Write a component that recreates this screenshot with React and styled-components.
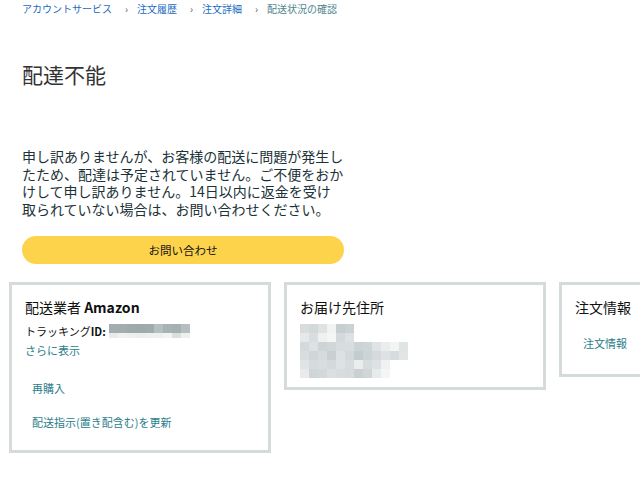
import React from 'react';
import styled, { createGlobalStyle } from 'styled-components';

const GlobalStyle = createGlobalStyle`
  html, body {
    margin: 0;
    padding: 0;
    background: #fff;
    overflow: hidden;
  }
  body {
    font-family: "Noto Sans CJK JP", "Noto Sans", sans-serif;
    color: #0f1111;
  }
`;

const Page = styled.div`
  width: 640px;
  height: 480px;
  overflow: hidden;
  display: flex;
  flex-direction: column;
`;

const Top = styled.div`
  padding-left: 22px;
  width: 322px;
  display: flex;
  flex-direction: column;
`;

const Breadcrumb = styled.nav`
  display: flex;
  align-items: center;
  height: 11px;
  margin-top: 3px;
  font-size: 10px;
  line-height: 11px;
  white-space: nowrap;
`;

const Crumb = styled.span`
  color: ${(p) => (p.$current ? '#4f8590' : '#1a6bbf')};
`;

const Sep = styled.span`
  color: #555;
  font-size: 10px;
  margin: 0 9px 0 13px;
`;

const Title = styled.h1`
  margin: 46px 0 0;
  font-size: 21px;
  line-height: 28px;
  font-weight: 400;
  color: #333;
`;

const Message = styled.p`
  margin: 60px 0 0;
  width: 322px;
  font-size: 14px;
  line-height: 17.6px;
  color: #1b3238;
`;

const ContactButton = styled.button`
  margin-top: 18px;
  width: 322px;
  height: 28px;
  border: none;
  border-radius: 14px;
  background: #fdd34b;
  font-family: inherit;
  font-size: 11.5px;
  color: #0f1111;
  padding: 0;
`;

const Cards = styled.div`
  display: flex;
  align-items: flex-start;
  gap: 13px;
  padding-left: 9px;
  margin-top: 18px;
`;

const Card = styled.section`
  flex: 0 0 auto;
  box-sizing: border-box;
  width: 262px;
  height: ${(p) => p.$h}px;
  border: 3px solid #d5dbdb;
  padding: 12px 13px 0;
  display: flex;
  flex-direction: column;
`;

const CardTitle = styled.h2`
  margin: 0;
  font-size: 14px;
  line-height: 20px;
  font-weight: 400;
  color: #0f1111;
  white-space: nowrap;
  b {
    font-weight: 600;
  }
`;

const TrackRow = styled.div`
  display: flex;
  align-items: center;
  margin-top: 6px;
  font-size: 11px;
  line-height: 16px;
  color: #0f1111;
  b {
    font-weight: 600;
  }
  svg {
    margin-left: 3px;
    display: block;
  }
`;

const Link = styled.a`
  display: block;
  color: #2c7d8c;
  font-size: ${(p) => p.$size || 11}px;
  line-height: 16px;
  margin-top: ${(p) => p.$top || 0}px;
  margin-left: ${(p) => p.$indent || 0}px;
  text-decoration: none;
  white-space: nowrap;
`;

const Blur = styled.svg`
  display: block;
  margin-top: ${(p) => p.$top || 0}px;
  margin-left: ${(p) => p.$left || 0}px;
`;

const trackTop = ['#a3adb0', '#a3adb0', '#9eaaad', '#9da9ab', '#a0abad', '#b5bfc0', '#a8b2b5', '#a5b0b3', '#b6bebf'];
const trackBottom = ['#e9ebeb', '#f0f1f1', '#eeefef', '#eceded', '#eeefef', '#efefef', '#f2f3f3', '#dcdfdf', '#eeefef'];

const addressRows = [
  ['#d8dcdd', '#d3d8da', '#dfe2e3', '#f1f2f2', '#c6ced0', '#cbd2d4'],
  ['#e6e8e9', '#d9dddf', '#eff1f1', '#f4f5f5', '#d4d9db', '#dde1e2'],
  ['#d4d9db', '#dde1e2', '#cdd4d6', '#d1d7d9', '#d7dcde', '#d9dddf', '#ccd3d5', '#cfd6d8', '#dfe3e4', '#eaeced', '#f3f4f4', '#e1e4e5'],
  ['#d9dddf', '#d0d6d8', '#d6dbdd', '#c8d0d2', '#dde1e2', '#d3d9db', '#c3cccf', '#cdd4d6', '#d5dadc', '#dfe2e3', '#d7dcde', '#e2e5e6'],
  ['#e1e4e5', '#d6dbdd', '#d9dddf', '#d4d9db', '#dee2e3', '#d7dcde', '#eaeced', '#d7dcde', '#dee1e2', '#f0f1f1'],
  ['#e8eaeb', '#cfd6d8', '#d3d9db', '#dbdfe0', '#d8dcde', '#d6dbdc', '#c9d0d2', '#d0d6d8', '#e8ebeb', '#f4f5f5'],
];

const TrackingBlur = () => (
  <Blur width="81" height="14" viewBox="0 0 81 14">
    {trackTop.map((c, i) => (
      <rect key={'t' + i} x={i * 9} y="0" width="9" height="9" fill={c} />
    ))}
    {trackBottom.map((c, i) => (
      <rect key={'b' + i} x={i * 9} y="9" width="9" height="5" fill={c} />
    ))}
  </Blur>
);

const AddressBlur = () => (
  <Blur width="108" height="54" viewBox="0 0 108 54" $top={7}>
    {addressRows.map((row, r) =>
      row.map((c, i) => <rect key={r + '-' + i} x={i * 9} y={r * 9} width="9" height="9" fill={c} />)
    )}
  </Blur>
);

export default function App() {
  return (
    <Page>
      <GlobalStyle />
      <Top>
        <Breadcrumb>
          <Crumb>アカウントサービス</Crumb>
          <Sep>›</Sep>
          <Crumb>注文履歴</Crumb>
          <Sep>›</Sep>
          <Crumb>注文詳細</Crumb>
          <Sep>›</Sep>
          <Crumb $current>配送状況の確認</Crumb>
        </Breadcrumb>
        <Title>配達不能</Title>
        <Message>
          申し訳ありませんが、お客様の配送に問題が発生したため、配達は予定されていません。ご不便をおかけして申し訳ありません。14日以内に返金を受け取られていない場合は、お問い合わせください。
        </Message>
        <ContactButton>お問い合わせ</ContactButton>
      </Top>
      <Cards>
        <Card $h={171}>
          <CardTitle>
            配送業者 <b>Amazon</b>
          </CardTitle>
          <TrackRow>
            トラッキング<b>ID:</b>
            <TrackingBlur />
          </TrackRow>
          <Link $top={3}>さらに表示</Link>
          <Link $top={22} $indent={7}>再購入</Link>
          <Link $top={18} $indent={7}>配送指示(置き配含む)を更新</Link>
        </Card>
        <Card $h={108}>
          <CardTitle>お届け先住所</CardTitle>
          <AddressBlur />
        </Card>
        <Card $h={95}>
          <CardTitle>注文情報</CardTitle>
          <Link $top={18} $indent={8}>注文情報</Link>
        </Card>
      </Cards>
    </Page>
  );
}
